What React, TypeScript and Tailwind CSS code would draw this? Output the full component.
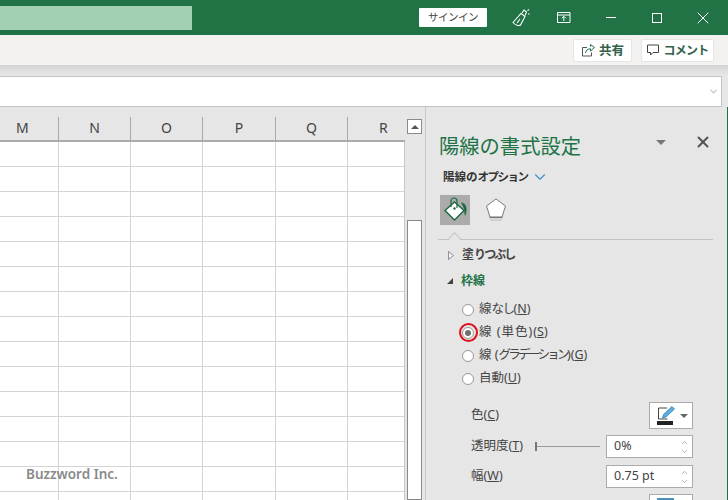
import { ChevronDown, ChevronUp, X } from 'lucide-react';

const font = { fontFamily: '"Noto Sans", "Noto Sans CJK JP", sans-serif' };

const columns = [
  { label: 'M', width: 'w-[59px]', pad: 'pl-[16px]' },
  { label: 'N', width: 'w-[72px]', pad: 'justify-center' },
  { label: 'O', width: 'w-[72px]', pad: 'justify-center' },
  { label: 'P', width: 'w-[73px]', pad: 'justify-center' },
  { label: 'Q', width: 'w-[72px]', pad: 'justify-center' },
  { label: 'R', width: 'w-[56px]', pad: 'pl-[31px]' },
];

const rows = Array.from({ length: 15 });

const Radio = ({ checked = false }) => (
  <span className="w-[12px] h-[12px] rounded-full bg-white border border-[#999] flex items-center justify-center shrink-0">
    {checked && <span className="w-[6px] h-[6px] rounded-full bg-[#6e6e6e]" />}
  </span>
);

const RadioRow = ({ children, keyName, checked = false }: { children: React.ReactNode; keyName: string; checked?: boolean }) => (
  <div className="h-[23px] flex items-center relative">
    <Radio checked={checked} />
    {checked && <span className="absolute left-[-3px] top-[2px] w-[19px] h-[19px] rounded-full border-2 border-[#e0101c]" />}
    <span className="ml-[5px] text-[12.5px] text-[#444] whitespace-nowrap">
      {children}(<span className="underline">{keyName}</span>)
    </span>
  </div>
);

const Spinner = ({ value }: { value: string }) => (
  <div className="w-[87px] h-[23px] bg-white border border-[#ababab] flex items-center pl-[7px] pr-[3px]">
    <span className="flex-1 text-[12.5px] text-[#444]">{value}</span>
    <div className="flex flex-col items-center text-[#777]">
      <ChevronUp size={9} strokeWidth={1.5} />
      <ChevronDown size={9} strokeWidth={1.5} />
    </div>
  </div>
);

const LineColorIcon = () => (
  <svg width="24" height="22" viewBox="0 0 24 22">
    <path d="M13 3H4.500v11h9" fill="none" stroke="#444" strokeWidth="1" />
    <path d="M8.500 13l1-3.500 8.500-8 2.500 2.500-8.500 8z" fill="#5aaee0" stroke="#2b6f9e" strokeWidth="0.7" />
    <rect x="3" y="16" width="16" height="4" fill="#222" />
  </svg>
);

const BucketIcon = () => (
  <svg width="30" height="30" viewBox="0 0 30 30">
    <path d="M14.500 7L24 15.500 14.500 25 5 15.500z" fill="#fff" stroke="#1e6b41" strokeWidth="1.500" />
    <path d="M11 12V6a3 3 0 0 1 6 0v7" fill="none" stroke="#1e6b41" strokeWidth="1.200" />
    <circle cx="14.500" cy="13.500" r="1.200" fill="#1e6b41" />
    <path d="M21 7.500c4 0 6 4 5.500 8.500-.2 2-.8 4-1.500 5-.6-2.500-.7-4-.7-6-.5-2-1.800-5-3.300-7.500z" fill="#1e6b41" />
  </svg>
);

const PentagonIcon = () => (
  <svg width="26" height="28" viewBox="0 0 26 28">
    <path d="M13 3l9.500 7-3.500 11H7L3.500 10z" fill="#fff" stroke="#7a7a7a" strokeWidth="1" />
    <path d="M6.500 21.500h13" stroke="#777" strokeWidth="1.200" />
    <path d="M7 24h12" stroke="#d0d0d0" strokeWidth="2" />
  </svg>
);

const BrushIcon = () => (
  <svg width="20" height="20" viewBox="0 0 20 20" fill="none" stroke="#fff" strokeWidth="1.100">
    <path d="M2 14.500L10 5.500l4 3-4.500 8.500c-1.500 1-5 .5-7.500-2.500z" />
    <path d="M6 15l3-4" />
    <path d="M11 5l2-3 2.500 2-1.500 3.500M16.500 2.500l1.500-1M17 6h1.500" />
  </svg>
);

const RibbonDisplayIcon = () => (
  <svg width="14" height="13" viewBox="0 0 14 13" fill="none" stroke="#fff" strokeWidth="1">
    <path d="M.5 1.500h12.500v10H.5zM.5 4h12.500" />
    <path d="M6.800 10V5.500M4.800 7.300l2-2 2 2" />
  </svg>
);

const ShareIcon = () => (
  <svg width="14" height="13" viewBox="0 0 14 13" fill="none" stroke="#555" strokeWidth="1">
    <path d="M6 3.500H1.500v8.500h9V8.500" />
    <path d="M4.500 9C5 6 7 4.800 9.500 4.800V7l4-3.500-4-3v2.200" stroke="#217346" />
  </svg>
);

const CommentIcon = () => (
  <svg width="13" height="13" viewBox="0 0 13 13" fill="none" stroke="#444" strokeWidth="1">
    <path d="M.5 1h11v7.500H6L3.500 11V8.500h-3z" />
  </svg>
);

const OutlineTriangle = () => (
  <svg width="6" height="9" viewBox="0 0 6 9" className="ml-[9px] shrink-0">
    <path d="M.5.5l5 4-5 4z" fill="#f2f2f2" stroke="#777" strokeWidth="0.8" />
  </svg>
);

export default function App() {
  return (
    <div className="w-[728px] h-[500px] overflow-hidden flex flex-col relative bg-[#e6e6e6]" style={font}>
      {/* title bar */}
      <div className="h-[35px] bg-[#217346] flex items-center shrink-0 text-white">
        <div className="w-[192px] h-[24px] bg-[#a3cfb3]" />
        <div className="ml-[227px] w-[68px] h-[19px] bg-white rounded-[1px] flex items-center justify-center text-[10.5px] tracking-[-0.5px] text-[#444]">
          サインイン
        </div>
        <div className="ml-[24px] flex items-center justify-center">
          <BrushIcon />
        </div>
        <div className="ml-[26px] flex items-center">
          <RibbonDisplayIcon />
        </div>
        <div className="ml-[35px] w-[10px] h-px bg-white" />
        <div className="ml-[36px] w-[10px] h-[10px] border border-white" />
        <X className="ml-[31px]" size={20} strokeWidth={1.2} />
      </div>

      {/* ribbon strip */}
      <div className="h-[30px] bg-[#f3f2f1] shrink-0 flex items-center justify-end pr-[14px] gap-[9px]">
        <div className="w-[59px] h-[23px] bg-white rounded-[2px] border border-[#e8e6e4] flex items-center justify-center gap-[4px] text-[12.5px] font-semibold text-[#33604a]">
          <ShareIcon />
          <span className="mt-[2px]">共有</span>
        </div>
        <div className="w-[73px] h-[23px] bg-white rounded-[2px] border border-[#e8e6e4] flex items-center justify-center gap-[4px] text-[12px] tracking-[-0.8px] font-semibold text-[#33604a]">
          <CommentIcon />
          <span className="mt-[2px]">コメント</span>
        </div>
      </div>

      {/* formula bar */}
      <div className="h-[11px] shrink-0 bg-gradient-to-b from-[#d4d4d4] to-[#e8e8e8]" />
      <div className="h-[31px] shrink-0 w-[722px] bg-white border border-[#c4c4c4] border-l-0 flex items-center justify-end pr-[2px]">
        <ChevronDown size={11} strokeWidth={2.5} className="text-[#c0c0c0]" />
      </div>

      <div className="flex flex-1 min-h-0">
        {/* sheet */}
        <div className="w-[405px] shrink-0 flex flex-col relative">
          <div className="h-[35px] shrink-0 flex items-stretch border-b-2 border-[#ababab] bg-[#e6e6e6] pt-[10px]">
            {columns.map((col) => (
              <div
                key={col.label}
                className={`${col.width} ${col.pad} pb-[2px] border-r border-[#a9a9a9] last:border-r-0 flex items-center text-[14px] text-[#444]`}
              >
                {col.label}
              </div>
            ))}
          </div>
          <div className="flex-1 bg-white border-r border-[#c8c8c8]">
            {rows.map((_, i) => (
              <div key={i} className="h-[25px] flex border-b border-[#d4d4d4]">
                {columns.map((col) => (
                  <div key={col.label} className={`${col.width} border-r border-[#d4d4d4] last:border-r-0`} />
                ))}
              </div>
            ))}
          </div>
          <span className="absolute left-[26px] top-[357px] text-[13.5px] font-semibold text-[#8a8a8a]">Buzzword Inc.</span>
        </div>

        {/* scrollbar */}
        <div className="w-[20px] shrink-0 pl-[2px] pt-[12px] flex flex-col">
          <div className="w-[15px] h-[15px] bg-white border border-[#8a8a8a] flex items-center justify-center">
            <span className="w-0 h-0 border-x-[4px] border-x-transparent border-b-[4px] border-b-[#555]" />
          </div>
          <div className="w-[15px] h-[86px]" />
          <div className="w-[15px] flex-1 bg-white border border-[#8a8a8a]" />
        </div>

        {/* format pane */}
        <div className="flex-1 min-h-0 overflow-hidden border-l border-[#c8c8c8] border-r border-r-[#217346] pt-[26px] pl-[13px] pr-[13px] flex flex-col [&>*]:shrink-0">
          <div className="flex items-center h-[27px]">
            <span className="text-[20.3px] text-[#217346] leading-none whitespace-nowrap">陽線の書式設定</span>
            <span className="ml-[75px] -mt-[9px] w-0 h-0 border-x-[5px] border-x-transparent border-t-[5px] border-t-[#777]" />
            <X className="ml-[28px] -mt-[9px] text-[#555] shrink-0" size={18} strokeWidth={2.6} />
          </div>
          <div className="flex items-center h-[20px] mt-[7px] pl-[4px]">
            <span className="text-[11.5px] font-semibold text-[#333]">
              陽線の<span className="tracking-[-1.5px]">オプション</span>
            </span>
            <ChevronDown className="ml-[3px] text-[#3f8fc9]" size={18} strokeWidth={1.5} />
          </div>
          <div className="flex items-center mt-[8px] pl-[1px] gap-[13px]">
            <div className="w-[30px] h-[30px] bg-[#ababab] flex items-center justify-center">
              <BucketIcon />
            </div>
            <PentagonIcon />
          </div>
          <div className="h-px bg-[#c2c2c2] mt-[14px] w-[275px] -ml-[1px] relative">
            <span className="absolute left-[12px] -top-[5px] w-[9px] h-[9px] rotate-45 bg-[#e6e6e6] border-l border-t border-[#c2c2c2]" />
          </div>
          <div className="flex items-center h-[20px] mt-[5px] text-[12px] font-semibold text-[#444]">
            <OutlineTriangle />
            <span className="ml-[8px]">
              塗<span className="tracking-[-2px]">りつぶし</span>
            </span>
          </div>
          <div className="flex items-center h-[20px] mt-[6px] text-[12px] font-semibold text-[#217346]">
            <span className="ml-[8px] w-0 h-0 border-b-[6px] border-b-[#444] border-l-[6px] border-l-transparent" />
            <span className="ml-[8px]">枠線</span>
          </div>
          <div className="mt-[7px] pl-[23px]">
            <RadioRow keyName="N">
              線<span className="tracking-[-1.5px]">なし</span>
            </RadioRow>
            <RadioRow keyName="S" checked>
              <span className="tracking-[1px]">線 (単色)</span>
            </RadioRow>
            <RadioRow keyName="G">
              線 (<span className="tracking-[-2.7px]">グラデーション</span>)
            </RadioRow>
            <RadioRow keyName="U">自動</RadioRow>
          </div>
          <div className="mt-[12px] pl-[32px] flex items-center h-[27px] justify-between w-[254px]">
            <span className="text-[12.5px] text-[#444]">
              色(<span className="underline">C</span>)
            </span>
            <div className="w-[44px] h-[27px] bg-white border border-[#ababab] flex items-center justify-center gap-[2px]">
              <LineColorIcon />
              <span className="w-0 h-0 border-x-[4px] border-x-transparent border-t-[4px] border-t-[#666]" />
            </div>
          </div>
          <div className="mt-[6px] pl-[32px] flex items-center h-[23px] justify-between w-[254px]">
            <span className="text-[12.5px] text-[#444] whitespace-nowrap">
              透明度(<span className="underline">T</span>)
            </span>
            <div className="flex items-center ml-[12px] flex-1 mr-[6px]">
              <span className="w-[2px] h-[9px] bg-[#777]" />
              <span className="flex-1 h-px bg-[#999]" />
            </div>
            <Spinner value="0%" />
          </div>
          <div className="mt-[7px] pl-[32px] flex items-center h-[23px] justify-between w-[254px]">
            <span className="text-[12.5px] text-[#444]">
              幅(<span className="underline">W</span>)
            </span>
            <Spinner value="0.75 pt" />
          </div>
          <div className="mt-[6px] ml-[210px] w-[44px] h-[27px] bg-white border border-[#ababab] pt-[3px] pl-[7px]">
            <div className="w-[17px] h-[4px] bg-[#4a90b8]" />
          </div>
        </div>
      </div>
    </div>
  );
}
